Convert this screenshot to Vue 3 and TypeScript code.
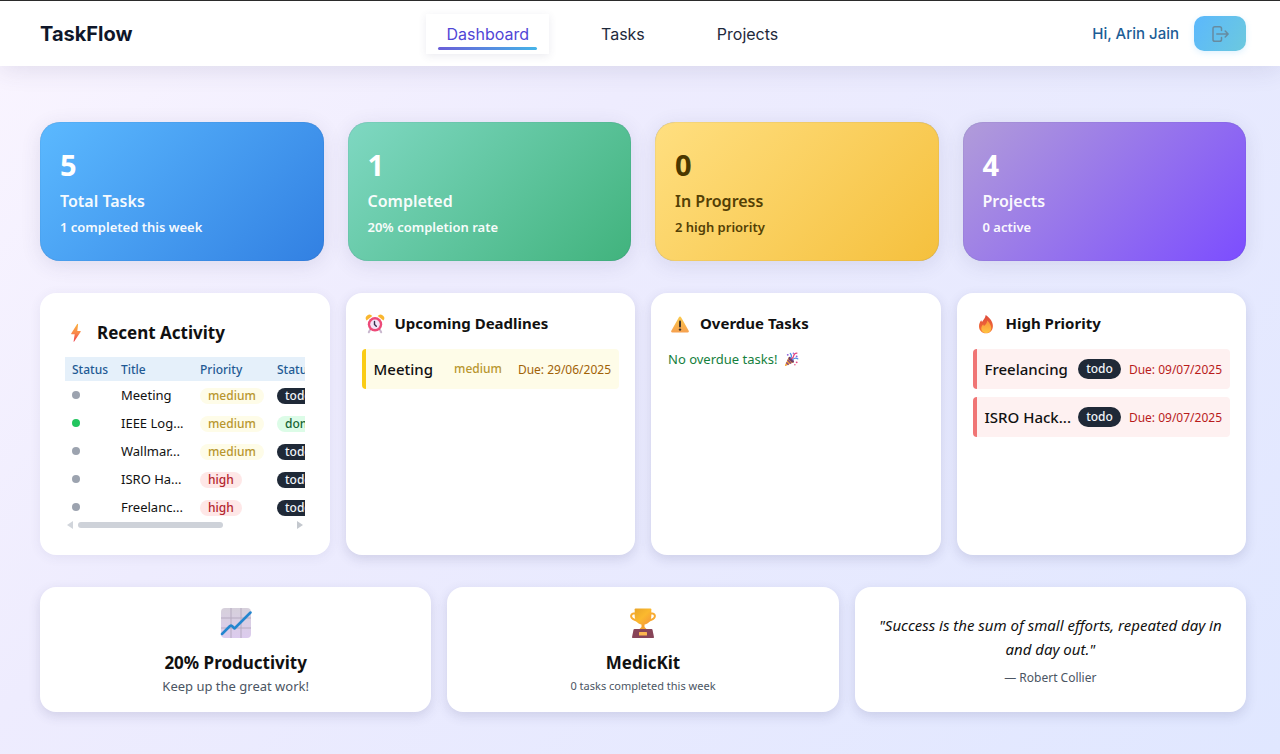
<script setup lang="ts">
interface Stat { value: number; label: string; note: string; tone: string }
interface Activity { title: string; priority: string; status: string }
interface Urgent { title: string; status: string; due: string }

const links = ['Dashboard', 'Tasks', 'Projects']
const activeLink = 'Dashboard'

const stats: Stat[] = [
  { value: 5, label: 'Total Tasks', note: '1 completed this week', tone: 'blue' },
  { value: 1, label: 'Completed', note: '20% completion rate', tone: 'green' },
  { value: 0, label: 'In Progress', note: '2 high priority', tone: 'yellow' },
  { value: 4, label: 'Projects', note: '0 active', tone: 'purple' },
]

const activity: Activity[] = [
  { title: 'Meeting', priority: 'medium', status: 'todo' },
  { title: 'IEEE Log...', priority: 'medium', status: 'done' },
  { title: 'Wallmar...', priority: 'medium', status: 'todo' },
  { title: 'ISRO Ha...', priority: 'high', status: 'todo' },
  { title: 'Freelanc...', priority: 'high', status: 'todo' },
]

const urgent: Urgent[] = [
  { title: 'Freelancing', status: 'todo', due: '09/07/2025' },
  { title: 'ISRO Hack...', status: 'todo', due: '09/07/2025' },
]
</script>

<template>
  <div class="page">
    <header class="topbar">
      <a class="brand" href="#">TaskFlow</a>
      <nav class="nav">
        <a v-for="link in links" :key="link" href="#" class="nav-link" :class="{ active: link === activeLink }">{{ link }}</a>
      </nav>
      <div class="user">
        <span class="greeting">Hi, Arin Jain</span>
        <button class="logout" type="button" aria-label="Log out">
          <svg width="18" height="18" viewBox="0 0 18 18" fill="none" stroke="currentColor" stroke-width="1.5" stroke-linecap="round" stroke-linejoin="round">
            <path d="M10.5 5.5V3.6A1.9 1.9 0 0 0 8.6 1.7H3.9A1.9 1.9 0 0 0 2 3.6v10.8a1.9 1.9 0 0 0 1.9 1.9h4.7a1.9 1.9 0 0 0 1.9-1.9v-1.9" />
            <path d="M5.8 9h11M14.2 6l2.9 3-2.9 3" />
          </svg>
        </button>
      </div>
    </header>

    <main class="content">
      <section class="stats">
        <article v-for="s in stats" :key="s.label" class="stat" :class="s.tone">
          <div class="stat-value">{{ s.value }}</div>
          <div class="stat-label">{{ s.label }}</div>
          <div class="stat-note">{{ s.note }}</div>
        </article>
      </section>

      <section class="panels">
        <article class="card activity">
          <h2 class="heading large">
            <svg class="icon" viewBox="0 0 20 20">
              <defs>
                <linearGradient id="bolt" x1="0" y1="0" x2="0" y2="1">
                  <stop offset="0" stop-color="#fbb03c" /><stop offset=".5" stop-color="#f98a4b" /><stop offset="1" stop-color="#ee3f4b" />
                </linearGradient>
              </defs>
              <path d="M11.2 1 5.2 10.6q-.3.6.4.6h3.1L7.6 18.4q.1.6.6.1l6.5-9.8q.3-.7-.4-.7h-3l.8-6.8q-.2-.7-.9-.2z" fill="url(#bolt)" />
            </svg>
            Recent Activity
          </h2>
          <div class="scroller">
            <table class="table">
              <thead>
                <tr><th class="c-dot">Status</th><th class="c-title">Title</th><th class="c-priority">Priority</th><th>Status</th></tr>
              </thead>
              <tbody>
                <tr v-for="row in activity" :key="row.title">
                  <td><span class="dot" :class="row.status"></span></td>
                  <td>{{ row.title }}</td>
                  <td><span class="badge" :class="row.priority">{{ row.priority }}</span></td>
                  <td><span class="badge" :class="row.status">{{ row.status }}</span></td>
                </tr>
              </tbody>
            </table>
          </div>
          <div class="scrollbar" aria-hidden="true">
            <i class="arrow left"></i>
            <div class="track"><div class="thumb"></div></div>
            <i class="arrow right"></i>
          </div>
        </article>

        <article class="card">
          <h2 class="heading">
            <svg class="icon" viewBox="0 0 20 20">
              <path d="M5 16 3.800 18.300M15 16l1.200 2.300" stroke="#c9b7ce" stroke-width="2" stroke-linecap="round" />
              <path d="M1.600 6.500A3.300 3.300 0 0 1 7.300 2zM18.400 6.500A3.300 3.300 0 0 0 12.700 2z" fill="#f9b62f" />
              <circle cx="10" cy="10.300" r="7.200" fill="#ed4a78" />
              <circle cx="10" cy="10.300" r="4.800" fill="#f3e3f6" />
              <path d="M9.500 7.500v3l1.800 1.800" fill="none" stroke="#38304b" stroke-width="1.400" stroke-linecap="round" />
            </svg>
            Upcoming Deadlines
          </h2>
          <ul class="items">
            <li class="item soon">
              <span class="item-title">Meeting</span>
              <span class="badge item-badge medium">medium</span>
              <span class="due">Due: 29/06/2025</span>
            </li>
          </ul>
        </article>

        <article class="card">
          <h2 class="heading">
            <svg class="icon" viewBox="0 0 20 20">
              <defs><linearGradient id="warn" x1="0" y1="0" x2="0" y2="1"><stop offset="0" stop-color="#fbc94c" /><stop offset="1" stop-color="#f6a04f" /></linearGradient></defs>
              <path d="M8.800 3.600q1.200-2 2.400 0l7.500 13.200q.8 1.700-1 1.700H2.300q-1.800 0-1-1.700z" fill="url(#warn)" />
              <path d="M10 7.500v5" stroke="#40352b" stroke-width="2" stroke-linecap="round" />
              <circle cx="10" cy="15.600" r="1.200" fill="#40352b" />
            </svg>
            Overdue Tasks
          </h2>
          <p class="clear">
            No overdue tasks!
            <svg class="party" width="15" height="15" viewBox="0 0 16 16">
              <path d="M5 5.500 1 14.200q-.2 1 .8.800l8.400-4z" fill="#f5a633" />
              <path d="M3.800 8.200l3.700 4.100M2.400 11.200l2.500 2.500" stroke="#8d4b86" stroke-width="1.600" />
              <ellipse cx="7.700" cy="8.300" rx="1.700" ry="3.800" transform="rotate(-43 7.700 8.300)" fill="#6f3a68" />
              <path d="M7.300 6.500Q8.800 4 6.700 1.500M9.200 8q3-2.500 5.500-.700" fill="none" stroke="#4f8fe6" stroke-width="1.300" stroke-linecap="round" />
              <path d="M8.500 7q1.500-1.300 2-3.500t3.300-2.300" fill="none" stroke="#e4487f" stroke-width="1.400" stroke-linecap="round" />
              <g fill="#8a5fd8"><circle cx="4" cy="3" r="1" /><circle cx="13.500" cy="4.700" r="1" /><circle cx="10" cy="1.200" r=".8" /></g>
              <g fill="#e4487f"><circle cx="13.500" cy="11" r="1" /><circle cx="11.600" cy="13.700" r=".8" /></g>
            </svg>
          </p>
        </article>

        <article class="card">
          <h2 class="heading">
            <svg class="icon" viewBox="0 0 20 20">
              <defs>
                <linearGradient id="fire" x1="0" y1="0" x2="0" y2="1"><stop offset="0" stop-color="#dd4a3c" /><stop offset="1" stop-color="#f97634" /></linearGradient>
                <linearGradient id="flame" x1="0" y1="0" x2="0" y2="1"><stop offset="0" stop-color="#fb923c" /><stop offset="1" stop-color="#fdc440" /></linearGradient>
              </defs>
              <path d="M9.700 1c3.900 2.600 7.200 6.300 7.200 11 0 4.500-2.900 7.300-6.900 7.300S3 16.600 3 12.300c0-2.600 1-4.500 2.200-6.100l.8 1.700C7.200 6 9.300 4.400 9.700 1z" fill="url(#fire)" />
              <path d="M11.200 6.500c2.400 2.300 4 4.900 4 7.500 0 3-2.200 5-5 5s-4.900-1.900-4.900-4.600c0-1.600.8-2.900 1.800-3.900l.9 1.400c1.700-.9 3-2.700 3.200-5.400z" fill="url(#flame)" />
            </svg>
            High Priority
          </h2>
          <ul class="items">
            <li v-for="u in urgent" :key="u.title" class="item hot">
              <span class="item-title">{{ u.title }}</span>
              <span class="badge item-badge" :class="u.status">{{ u.status }}</span>
              <span class="due">Due: {{ u.due }}</span>
            </li>
          </ul>
        </article>
      </section>

      <section class="footer-cards">
        <article class="card summary">
          <svg width="32" height="32" viewBox="0 0 32 32">
            <defs><linearGradient id="chart" x1="0" y1="0" x2="0" y2="1"><stop offset="0" stop-color="#d6d0db" /><stop offset="1" stop-color="#dccbee" /></linearGradient></defs>
            <rect x="1" y="1" width="30" height="30" rx="4" fill="url(#chart)" />
            <path d="M11 1v30M21 1v30M1 11h30M1 21h30" stroke="#b6abc0" stroke-width="1" />
            <path d="M2 27l8-8q1-.8 2 0l2.500 2.500L30.500 5.500" fill="none" stroke="#2386cf" stroke-width="2.500" stroke-linecap="round" stroke-linejoin="round" />
          </svg>
          <h3 class="summary-title">20% Productivity</h3>
          <p class="summary-text">Keep up the great work!</p>
        </article>
        <article class="card summary">
          <svg width="32" height="32" viewBox="0 0 32 32">
            <defs>
              <linearGradient id="cup" x1="0" y1="0" x2="1" y2="1"><stop offset="0" stop-color="#e9a52a" /><stop offset=".5" stop-color="#fbb92e" /><stop offset="1" stop-color="#f5943a" /></linearGradient>
            </defs>
            <path d="M9.500 6.500H6.500a2.600 2.600 0 0 0-2.300 3.300C5 12.500 7.500 13 11 14M22.500 6.500h3a2.600 2.600 0 0 1 2.300 3.300C27 12.500 24.500 13 21 14" fill="none" stroke="#f8ab32" stroke-width="2" stroke-linecap="round" />
            <path d="M14.500 16h3v4l2.500 2.500h-8l2.500-2.500z" fill="#f5a12f" />
            <path d="M8.500 1.500h15q.8 0 .8.800v6.700c0 5-3.500 8.700-8.300 8.700S7.700 14 7.700 9V2.300q0-.8.800-.8z" fill="url(#cup)" />
            <path d="M7.500 22h17q.8 0 1 .8l1.500 7.400q.1.800-.8.800H5.800q-.9 0-.8-.8l1.500-7.400q.2-.8 1-.8z" fill="#874458" />
            <rect x="12" y="25" width="8" height="3.500" rx=".5" fill="#fbb650" />
          </svg>
          <h3 class="summary-title">MedicKit</h3>
          <p class="summary-text small">0 tasks completed this week</p>
        </article>
        <article class="card summary">
          <blockquote class="quote">"Success is the sum of small efforts, repeated day in and day out."</blockquote>
          <p class="author">— Robert Collier</p>
        </article>
      </section>
    </main>
  </div>
</template>

<style>
body {
  margin: 0;
  background: #e0e7ff;
}
</style>

<style scoped>
* { box-sizing: border-box; }
.page {
  min-height: 100vh;
  font-family: "Segoe UI", "Noto Sans", sans-serif;
  color: #111;
  background: linear-gradient(135deg, #faf5ff 0%, #eeecfe 35%, #e0e7ff 100%);
}
.topbar {
  position: relative;
  display: flex;
  align-items: center;
  justify-content: space-between;
  height: 66px;
  padding: 0 34px 0 40px;
  border-top: 1px solid #2b2b2b;
  background: #fff;
  box-shadow: 0 4px 24px rgba(60, 60, 110, 0.12);
  font-family: Inter, sans-serif;
}
.brand {
  color: #0f172a;
  font-size: 20px;
  font-weight: 700;
  text-decoration: none;
}
.nav { display: flex; gap: 32px; }
.nav-link {
  position: relative;
  padding: 8px 20px;
  color: #1e293b;
  font-size: 16px;
  line-height: 24px;
  text-decoration: none;
}
.nav-link.active {
  color: #5046d6;
  box-shadow: 0 2px 8px rgba(60, 60, 110, 0.1);
}
.nav-link.active::after {
  content: "";
  position: absolute;
  left: 12px;
  right: 12px;
  bottom: 4px;
  height: 3px;
  border-radius: 2px;
  background: linear-gradient(90deg, #6a5ed8, #45b4e8);
}
.user { display: flex; align-items: center; gap: 15px; }
.greeting { color: #1c5d96; font-size: 15px; font-weight: 500; }
.logout {
  display: grid;
  place-items: center;
  width: 52px;
  height: 35px;
  padding: 0;
  border: 0;
  border-radius: 10px;
  color: #678ba0;
  background: linear-gradient(120deg, #5bb8fd, #6cc9de);
  box-shadow: 0 2px 6px rgba(90, 184, 250, 0.2);
}
.content {
  display: grid;
  gap: 32px;
  padding: 56px 34px 41px 40px;
}
.stats { display: grid; grid-template-columns: repeat(4, 1fr); gap: 24px; }
.stat {
  padding: 24px 20px;
  border-radius: 20px;
  color: #fff;
  box-shadow: 0 4px 20px rgba(60, 60, 110, 0.12), inset 0 0 1px rgba(0, 40, 90, 0.4);
}
.stat.blue { background: linear-gradient(135deg, #5bb9ff, #3280e2); }
.stat.green { background: linear-gradient(135deg, #7fd8c2, #41b37d); }
.stat.yellow { background: linear-gradient(135deg, #ffdf80, #f5c03d); color: #4b3800; }
.stat.purple { background: linear-gradient(135deg, #b19cd9, #7c4dff); }
.stat-value { font-size: 29px; font-weight: 700; line-height: 38px; }
.stat-label { margin-top: 4px; font-size: 16px; font-weight: 600; line-height: 26px; opacity: 0.95; }
.stat-note { margin-top: 3px; font-size: 13px; font-weight: 600; line-height: 20px; opacity: 0.95; }
.panels { display: grid; grid-template-columns: repeat(4, minmax(0, 1fr)); gap: 16px; }
.card {
  min-width: 0;
  padding: 17px 16px;
  border-radius: 16px;
  background: #fff;
  box-shadow: 0 4px 12px rgba(60, 60, 110, 0.16);
}
.card.activity { padding: 25px; box-shadow: 0 2px 12px rgba(60, 60, 110, 0.08); }
.heading {
  display: flex;
  align-items: center;
  gap: 10px;
  margin: 0;
  padding-left: 3px;
  font-size: 15px;
  font-weight: 700;
  line-height: 27px;
}
.heading.large { padding-left: 1px; gap: 11px; margin-bottom: 9px; font-size: 17px; line-height: 30px; }
.icon { flex: none; width: 20px; height: 20px; }
.scroller { overflow: hidden; }
.table { width: 394px; table-layout: fixed; border-collapse: collapse; }
.table th {
  height: 24px;
  padding: 0 7px;
  background: #e5f0fa;
  color: #1f5a94;
  font-size: 12px;
  font-weight: 500;
  text-align: left;
  white-space: nowrap;
}
.table td { height: 28px; padding: 0 7px; font-size: 13px; white-space: nowrap; }
.c-dot { width: 49px; }
.c-title { width: 79px; }
.c-priority { width: 77px; }
.dot { display: block; width: 8px; height: 8px; border-radius: 50%; background: #9ca3af; }
.dot.done { background: #22c55e; }
.badge {
  display: inline-block;
  padding: 0 8px;
  border-radius: 12px;
  font-size: 12px;
  font-weight: 500;
  line-height: 16px;
}
.badge.medium { background: #fefce8; color: #b8962e; }
.badge.high { background: #fee7e7; color: #b3252d; }
.badge.todo { background: #1f2937; color: #f1f5f9; }
.badge.done { background: #dcfce7; color: #166534; }
.scrollbar { display: flex; align-items: center; gap: 5px; height: 10px; margin-top: -1px; padding: 0 2px; }
.arrow { border: 4px solid transparent; }
.arrow.left { border-left: 0; border-right: 6px solid #d1d5db; }
.arrow.right { border-right: 0; border-left: 6px solid #c4c8ce; }
.track { flex: 1; }
.thumb { width: 68%; height: 6px; border-radius: 3px; background: #ced2d9; }
.items { display: grid; gap: 8px; margin: 12px 0 0; padding: 0; list-style: none; }
.item {
  display: flex;
  align-items: center;
  height: 40px;
  padding: 0 8px;
  border-left: 4px solid;
  border-radius: 4px;
}
.item.soon { border-color: #facc15; background: #fefce8; color: #a16207; }
.item.hot { border-color: #f07575; background: #fef1f1; color: #b91c1c; }
.item-title { flex: 1; color: #111; font-size: 15px; font-weight: 500; white-space: nowrap; }
.item-badge { line-height: 20px; }
.due { margin-left: 8px; font-size: 12px; white-space: nowrap; }
.clear { display: flex; align-items: center; gap: 7px; margin: 12px 0 0 1px; color: #15803d; font-size: 13px; line-height: 20px; }
.footer-cards { display: grid; grid-template-columns: repeat(3, minmax(0, 1fr)); gap: 16px; }
.summary { display: flex; flex-direction: column; align-items: center; padding: 20px 20px 16px; text-align: center; }
.summary-title { margin: 11px 0 0; font-size: 17px; font-weight: 700; line-height: 26px; }
.summary-text { margin: 0; color: #4b5563; font-size: 13px; line-height: 20px; }
.summary-text.small { font-size: 11px; }
.quote { margin: 6px 0 0; font-size: 15px; font-style: italic; line-height: 24px; }
.author { margin: 7px 0 0; color: #4b5563; font-size: 12px; line-height: 20px; }
</style>
